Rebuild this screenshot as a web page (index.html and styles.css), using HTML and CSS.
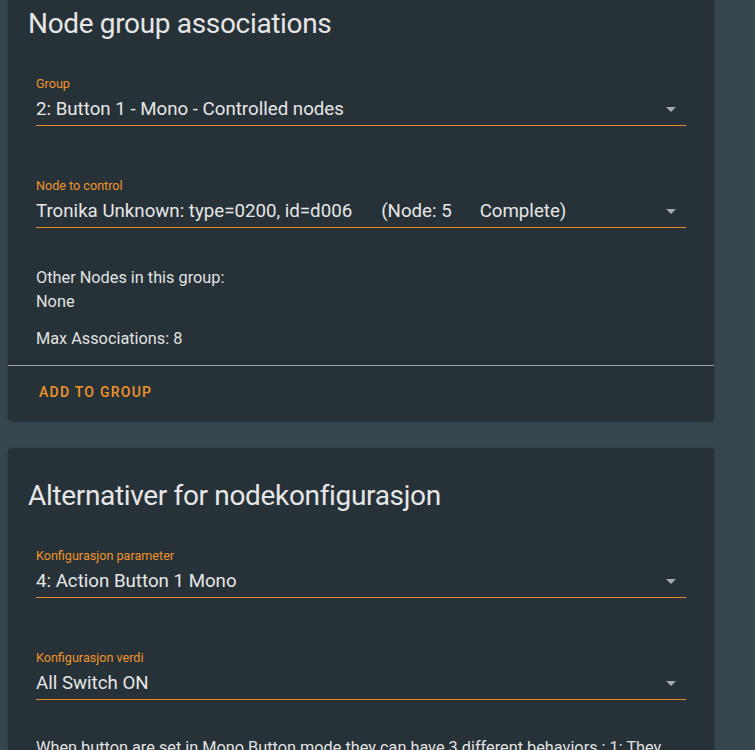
FILE: index.html
```html
<!DOCTYPE html>
<html lang="en">
<head>
<meta charset="utf-8">
<title>Node config</title>
<link rel="stylesheet" href="styles.css">
</head>
<body>
<div class="page">
  <section class="card card-first">
    <h1 class="card-header">Node group associations</h1>
    <div class="card-content">
      <div class="field">
        <label class="field-label">Group</label>
        <div class="field-value">
          <span class="value-text">2: Button 1 - Mono - Controlled nodes</span>
          <svg class="arrow" viewBox="0 0 24 24" width="24" height="24"><path d="M7 10l5 5 5-5z"/></svg>
        </div>
      </div>
      <div class="field field-gap">
        <label class="field-label">Node to control</label>
        <div class="field-value">
          <span class="value-text">Tronika Unknown: type=0200, id=d006<span class="sep">(Node: 5</span><span class="sep2">Complete)</span></span>
          <svg class="arrow" viewBox="0 0 24 24" width="24" height="24"><path d="M7 10l5 5 5-5z"/></svg>
        </div>
      </div>
      <div class="info">
        <div class="line">Other Nodes in this group:</div>
        <div class="line">None</div>
        <div class="line line-gap">Max Associations: 8</div>
      </div>
    </div>
    <div class="card-actions">
      <span class="btn">Add to group</span>
    </div>
  </section>

  <section class="card card-second">
    <h1 class="card-header">Alternativer for nodekonfigurasjon</h1>
    <div class="card-content">
      <div class="field">
        <label class="field-label">Konfigurasjon parameter</label>
        <div class="field-value">
          <span class="value-text">4: Action Button 1 Mono</span>
          <svg class="arrow" viewBox="0 0 24 24" width="24" height="24"><path d="M7 10l5 5 5-5z"/></svg>
        </div>
      </div>
      <div class="field field-gap">
        <label class="field-label">Konfigurasjon verdi</label>
        <div class="field-value">
          <span class="value-text">All Switch ON</span>
          <svg class="arrow" viewBox="0 0 24 24" width="24" height="24"><path d="M7 10l5 5 5-5z"/></svg>
        </div>
      </div>
      <p class="desc">When button are set in Mono Button mode they can have 3 different behaviors : 1: They send Switch ON to the associated nodes, 2: They send Switch OFF to the associated nodes, 3: They toggle the associated nodes.</p>
    </div>
  </section>
</div>
</body>
</html>
```

FILE: styles.css
```css
html, body {
  margin: 0;
  padding: 0;
  background: #37474f;
  font-family: Roboto, "Noto Sans", "Liberation Sans", sans-serif;
  color: #e1e1e1;
  overflow: hidden;
}

.page {
  width: 706px;
  padding: 0 8px;
  margin-top: -24px;
}

.card {
  background: #263238;
  border-radius: 3px;
  box-shadow: 0 2px 2px rgba(0,0,0,.14), 0 1px 5px rgba(0,0,0,.12), 0 3px 1px -2px rgba(0,0,0,.2);
}

.card-second {
  margin-top: 28px;
}

.card-header {
  margin: 0;
  padding: 24px 20px 0 20px;
  font-size: 28px;
  font-weight: 400;
  line-height: 48px;
  letter-spacing: -0.012em;
  color: #e6e6e6;
}

.card-content {
  padding: 27px 28px 0 28px;
}

.field {
  display: flex;
  flex-direction: column;
}

.field-gap {
  margin-top: 51px;
}

.field-label {
  font-size: 12.6px;
  line-height: 18px;
  color: #f0932b;
}

.field-value {
  margin-top: 4px;
  display: flex;
  align-items: flex-start;
  font-size: 18.7px;
  line-height: 24px;
  padding-bottom: 4px;
  border-bottom: 1px solid #e88a28;
  color: #e6e6e6;
}

.value-text {
  flex: 1;
  white-space: nowrap;
}

.sep {
  margin-left: 29px;
}

.sep2 {
  margin-left: 28px;
}

.arrow {
  fill: #a8abad;
  margin-right: 3px;
  flex: none;
}

.info {
  margin-top: 38px;
  font-size: 16.3px;
  line-height: 24px;
}

.line-gap {
  margin-top: 13px;
}

.card-actions {
  margin-top: 14px;
  border-top: 1px solid #9ea2a4;
  padding: 14px 31px 16px 31px;
}

.btn {
  display: inline-block;
  font-size: 14px;
  font-weight: 500;
  line-height: 24px;
  letter-spacing: 0.0892em;
  text-transform: uppercase;
  color: #f0932b;
}

.desc {
  margin: 36px 0 0 0;
  font-size: 16.3px;
  line-height: 24px;
  padding-bottom: 20px;
}
```
